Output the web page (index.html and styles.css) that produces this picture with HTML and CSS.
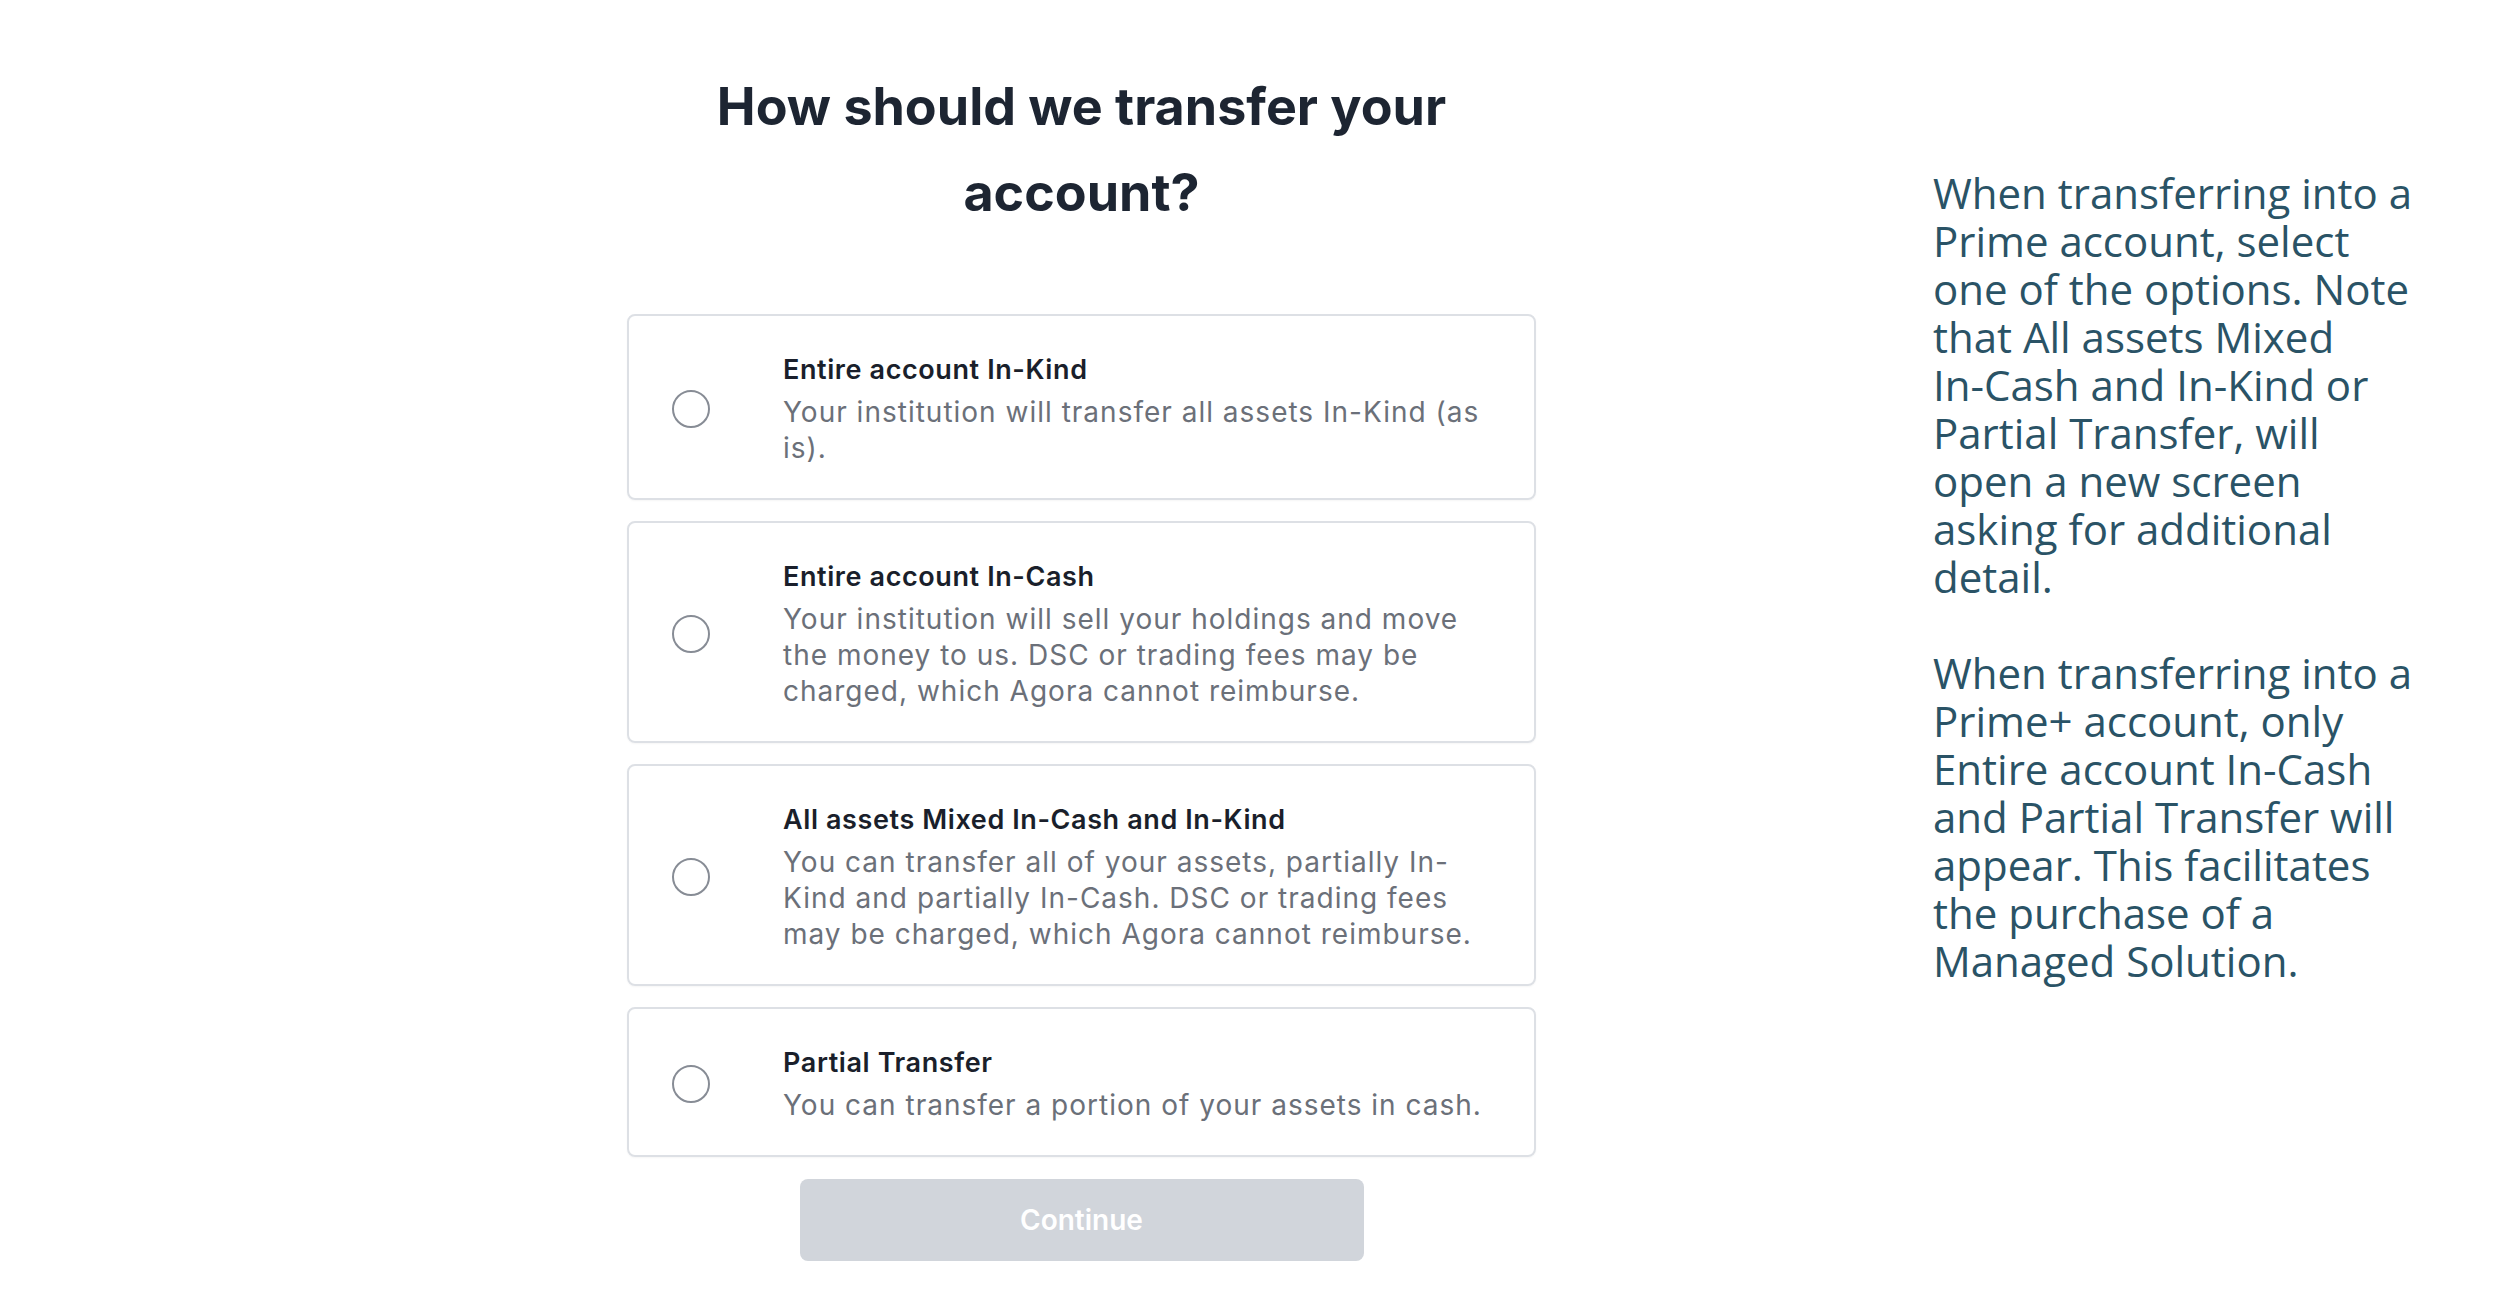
FILE: index.html
```html
<!DOCTYPE html>
<html lang="en">
<head>
  <meta charset="UTF-8" />
  <meta name="viewport" content="width=device-width, initial-scale=1.0" />
  <title>Transfer type</title>
  <link rel="stylesheet" href="styles.css">
</head>
<body>
  <div class="page">
    <main class="transfer">
      <h1 class="transfer-title">How should we transfer your account?</h1>

      <div class="options">
        <label class="option">
          <span class="radio"></span>
          <span class="option-text">
            <span class="option-name">Entire account In-Kind</span>
            <span class="option-desc">Your institution will transfer all assets In-Kind (as is).</span>
          </span>
        </label>

        <label class="option">
          <span class="radio"></span>
          <span class="option-text">
            <span class="option-name">Entire account In-Cash</span>
            <span class="option-desc">Your institution will sell your holdings and move the money to us. DSC or trading fees may be charged, which Agora cannot reimburse.</span>
          </span>
        </label>

        <label class="option">
          <span class="radio"></span>
          <span class="option-text">
            <span class="option-name">All assets Mixed In-Cash and In-Kind</span>
            <span class="option-desc">You can transfer all of your assets, partially In-Kind and partially In-Cash. DSC or trading fees may be charged, which Agora cannot reimburse.</span>
          </span>
        </label>

        <label class="option">
          <span class="radio"></span>
          <span class="option-text">
            <span class="option-name">Partial Transfer</span>
            <span class="option-desc">You can transfer a portion of your assets in cash.</span>
          </span>
        </label>
      </div>

      <button class="continue-btn" disabled>Continue</button>
    </main>

    <aside class="note">
      <p>When transferring into a Prime account, select one of the options. Note that All assets Mixed In-&#8288;Cash and In-&#8288;Kind or Partial Transfer, will open a new screen asking for additional detail.</p>
      <p>When transferring into a Prime+ account, only Entire account In-&#8288;Cash and Partial Transfer will appear. This facilitates the purchase of a Managed Solution.</p>
    </aside>
  </div>
</body>
</html>
```

FILE: styles.css
```css
:root {
  --ink: #1d2532;
  --muted: #6b7079;
  --line: #dde0e5;
  --teal: #2a5366;
}

html, body {
  margin: 0;
  padding: 0;
  background: #fff;
  font-family: Inter, 'Noto Sans', sans-serif;
  color: var(--ink);
}

.page {
  display: flex;
  align-items: flex-start;
  gap: 397px;
  padding: 64px 0 0 627px;
}

.transfer {
  width: 909px;
  display: flex;
  flex-direction: column;
  align-items: center;
}

.transfer-title {
  margin: 0 0 78px;
  max-width: 820px;
  font-size: 52px;
  line-height: 86px;
  font-weight: 700;
  text-align: center;
  color: var(--ink);
}

.options {
  width: 100%;
  display: flex;
  flex-direction: column;
  gap: 21px;
}

.option {
  display: flex;
  align-items: center;
  gap: 73px;
  padding: 36px 42px 32px 43px;
  border: 2px solid var(--line);
  border-radius: 8px;
  box-shadow: 0 1px 2px rgba(0, 0, 0, 0.04);
  cursor: pointer;
}

.radio {
  flex: none;
  width: 38px;
  height: 38px;
  box-sizing: border-box;
  border: 2px solid #878c95;
  border-radius: 50%;
}

.option-text {
  display: flex;
  flex-direction: column;
  gap: 6px;
}

.option-name {
  font-size: 27px;
  line-height: 36px;
  font-weight: 600;
  letter-spacing: 0.6px;
  color: #1a1f2b;
}

.option-desc {
  font-size: 28px;
  line-height: 36px;
  letter-spacing: 1px;
  color: var(--muted);
}

.continue-btn {
  margin-top: 22px;
  width: 564px;
  height: 82px;
  border: none;
  border-radius: 8px;
  background-color: #d1d5db;
  color: #fff;
  font-family: inherit;
  font-size: 28px;
  font-weight: 600;
}

.note {
  width: 484px;
  padding-top: 105px;
  font-family: 'Open Sans', sans-serif;
  font-size: 42px;
  line-height: 48px;
  color: var(--teal);
}

.note p {
  margin: 0 0 48px;
}
```
